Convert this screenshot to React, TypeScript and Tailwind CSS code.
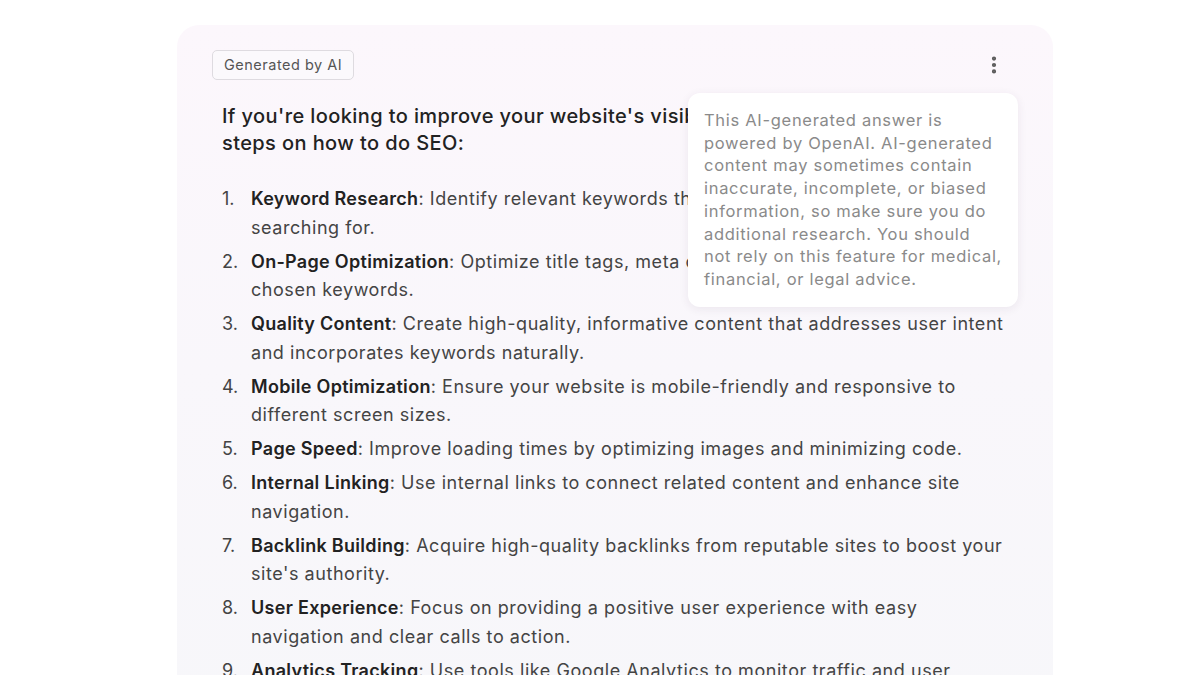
import { MoreVertical } from 'lucide-react';

type Step = { title: string; lines: string[] };

const steps: Step[] = [
  { title: 'Keyword Research', lines: [': Identify relevant keywords that your target audience is', 'searching for.'] },
  { title: 'On-Page Optimization', lines: [': Optimize title tags, meta descriptions, and headers with', 'chosen keywords.'] },
  { title: 'Quality Content', lines: [': Create high-quality, informative content that addresses user intent', 'and incorporates keywords naturally.'] },
  { title: 'Mobile Optimization', lines: [': Ensure your website is mobile-friendly and responsive to', 'different screen sizes.'] },
  { title: 'Page Speed', lines: [': Improve loading times by optimizing images and minimizing code.'] },
  { title: 'Internal Linking', lines: [': Use internal links to connect related content and enhance site', 'navigation.'] },
  { title: 'Backlink Building', lines: [': Acquire high-quality backlinks from reputable sites to boost your', "site's authority."] },
  { title: 'User Experience', lines: [': Focus on providing a positive user experience with easy', 'navigation and clear calls to action.'] },
  { title: 'Analytics Tracking', lines: [': Use tools like Google Analytics to monitor traffic and user', 'behavior.'] },
];

const disclaimer = [
  'This AI-generated answer is',
  'powered by OpenAI. AI-generated',
  'content may sometimes contain',
  'inaccurate, incomplete, or biased',
  'information, so make sure you do',
  'additional research. You should',
  'not rely on this feature for medical,',
  'financial, or legal advice.',
];

const App = () => {
  return (
    <div className="w-[1200px] h-[675px] overflow-hidden bg-white" style={{ fontFamily: 'Inter, "Noto Sans", sans-serif' }}>
      <div className="ml-[177px] mt-[25px] w-[876px] h-[700px] rounded-t-[22px] bg-gradient-to-b from-[#fcf7fc] via-[#f9f7fb] to-[#f7f7fa] relative">
        <div className="pl-[35px] pt-[25px]">
          <div className="inline-flex items-center h-[30px] px-[11px] rounded-[5px] border border-[#dedbe0] bg-[#fbf9fc] text-[14.5px] text-[#555] tracking-[0.5px]">
            Generated by AI
          </div>
        </div>

        <button className="absolute left-[806px] top-[29px] text-[#5a5a5a]">
          <MoreVertical size={22} strokeWidth={2.6} />
        </button>

        <div className="pl-[45px] pr-[38px] pt-[23px]">
          <h2 className="text-[20px] leading-[27px] text-[#222] font-medium tracking-[0.4px] whitespace-nowrap">
            If you're looking to improve your website's visibility, here are key
            <br />
            steps on how to do SEO:
          </h2>

          <ol className="mt-[28px] flex flex-col gap-[5.5px] text-[18px] leading-[28.5px] text-[#444] tracking-[0.55px]">
            {steps.map((s, i) => (
              <li key={s.title} className="flex">
                <span className="w-[29px] shrink-0 text-[#444] tracking-normal">{i + 1}.</span>
                <div className="whitespace-nowrap">
                  {s.lines.map((l, j) => (
                    <div key={j}>
                      {j === 0 && <span className="font-semibold text-[#222] tracking-[0.3px]">{s.title}</span>}
                      {l}
                    </div>
                  ))}
                </div>
              </li>
            ))}
          </ol>
        </div>

        <div className="absolute left-[511px] top-[68px] w-[330px] rounded-[12px] bg-white shadow-[0_2px_10px_rgba(60,40,80,0.08)] px-[16px] pt-[16px] pb-[16px] text-[16.5px] leading-[22.7px] text-[#8a8a8a] tracking-[0.7px]">
          {disclaimer.map((l) => (
            <div key={l} className="whitespace-nowrap">{l}</div>
          ))}
        </div>
      </div>
    </div>
  );
};

export default App;
